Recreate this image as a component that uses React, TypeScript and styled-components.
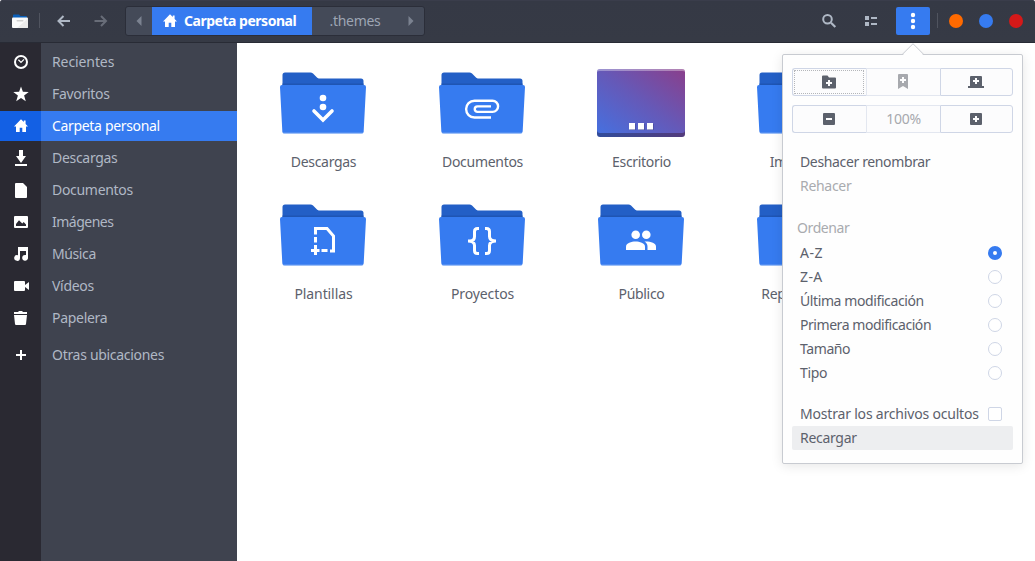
import React from 'react';
import styled, { createGlobalStyle, css } from 'styled-components';

const GlobalStyle = createGlobalStyle`
  * { box-sizing: border-box; }
  body {
    margin: 0;
    background: #fff;
    font-family: 'Noto Sans', 'Open Sans', sans-serif;
    font-size: 14px;
    color: #5c616c;
    overflow: hidden;
  }
  svg { display: block; flex: none; }
`;

const Window = styled.div`
  position: relative;
  display: flex;
  flex-direction: column;
  width: 1035px;
  height: 561px;
  overflow: hidden;
`;

const Header = styled.header`
  flex: none;
  display: flex;
  align-items: center;
  height: 43px;
  padding: 0 12px 1px;
  border-bottom: 1px solid #282b35;
  border-radius: 3px 3px 0 0;
  background: linear-gradient(#353945, #363a45);
  box-shadow: inset 0 1px #3a3d4b;
`;

const Separator = styled.div<{ $left: number; $right: number }>`
  width: 1px;
  height: 15px;
  margin: 0 ${p => p.$right}px 0 ${p => p.$left}px;
  background: #50545f;
`;

const IconButton = styled.button<{ $width: number; $active?: boolean; $dim?: boolean }>`
  display: flex;
  align-items: center;
  justify-content: center;
  width: ${p => p.$width}px;
  height: 28px;
  padding: 0;
  border: 0;
  border-radius: 2px;
  background: ${p => (p.$active ? '#367bf0' : 'transparent')};
  color: ${p => (p.$active ? '#fff' : p.$dim ? '#686d78' : '#afb8c5')};
`;

const PathBar = styled.nav`
  display: flex;
  width: 300px;
  height: 30px;
  margin-left: 7px;
  border: 1px solid #2b2e39;
  border-radius: 3px;
  background: #444a58;
  color: #9da5b3;
`;

const PathStep = styled.div<{ $width: number; $current?: boolean }>`
  display: flex;
  align-items: center;
  justify-content: center;
  gap: 6px;
  width: ${p => p.$width}px;
  height: 28px;
  color: #7b8290;
  ${p => p.$current && css`
    justify-content: flex-start;
    padding-left: 10px;
    background: #367bf0;
    color: #fff;
    font-weight: 700;
  `}
`;

const HeaderTools = styled.div`
  display: flex;
  margin-left: auto;
`;

const ViewTools = styled.div`
  display: flex;
  margin-right: 4px;
`;

const WindowButtons = styled.div`
  display: flex;
  gap: 16px;
`;

const Dot = styled.span<{ $color: string }>`
  width: 14px;
  height: 14px;
  border-radius: 50%;
  background: ${p => p.$color};
`;

const Body = styled.div`
  flex: 1;
  display: flex;
  min-height: 0;
`;

const Sidebar = styled.aside`
  width: 237px;
  padding-top: 4px;
  background: linear-gradient(to right, #2a2932 41px, #3f434f 41px);
`;

const Place = styled.div<{ $selected?: boolean; $offset?: number }>`
  display: flex;
  height: 30px;
  margin: ${p => p.$offset ?? 0}px 0 2px;
  color: ${p => (p.$selected ? '#fff' : '#b0b8c5')};
  background: ${p => (p.$selected ? '#367bf0' : 'transparent')};
`;

const PlaceIcon = styled.div<{ $selected?: boolean }>`
  display: flex;
  align-items: center;
  width: 41px;
  padding-left: 13px;
  color: #fff;
  background: ${p => (p.$selected ? '#1360e4' : 'transparent')};
`;

const Label = styled.span<{ $spacing?: number; $color?: string }>`
  line-height: 20px;
  white-space: nowrap;
  letter-spacing: ${p => p.$spacing ?? -0.3}px;
  ${p => p.$color && `color: ${p.$color};`}
`;

const PlaceLabel = styled(Label)`
  margin: 5px 0 0 11px;
`;

const FileLabel = styled(Label)`
  padding-left: 2px;
`;

const Files = styled.main`
  flex: 1;
  display: grid;
  grid-template-columns: repeat(4, 159px);
  grid-auto-rows: 132px;
  align-content: start;
  padding: 24px 0 0 6px;
  overflow: hidden;
  background: #fff;
`;

const File = styled.div`
  display: flex;
  flex-direction: column;
  align-items: center;
  gap: 13px;
`;

const Popover = styled.section`
  position: absolute;
  left: 782px;
  top: 54px;
  width: 241px;
  height: 410px;
  padding: 13px 9px 0;
  border: 1px solid #c8cbd1;
  border-radius: 2px;
  background: #fefefe;
  box-shadow: 0 2px 12px rgba(0, 0, 0, 0.1);
`;

const Arrow = styled.svg`
  position: absolute;
  left: 118px;
  top: -12px;
`;

const ButtonGroup = styled.div`
  display: grid;
  grid-template-columns: 74px 74px 73px;
  height: 28px;
  margin-bottom: 9px;
`;

const GroupButton = styled.button<{ $disabled?: boolean; $focus?: boolean }>`
  display: flex;
  align-items: center;
  justify-content: center;
  padding: 0 2px 0 0;
  font: inherit;
  color: ${p => (p.$disabled ? '#a7a9ae' : '#5c616c')};
  background: #fcfcfd;
  border: 1px solid #cfd6e6;
  ${p => p.$disabled && 'border-color: #e3e7f0; border-right: 0;'}
  &:first-child { border-radius: 3px 0 0 3px; border-right: 0; }
  &:last-child { border-radius: 0 3px 3px 0; }
  ${p => p.$focus && css`
    outline: 1px dotted #b4b6ba;
    outline-offset: -3px;
  `}
`;

const ZoomLevel = styled(GroupButton)`
  padding: 0;
`;

const MenuItem = styled.div<{ $hover?: boolean; $top?: number; $indent?: number }>`
  display: flex;
  align-items: center;
  justify-content: space-between;
  height: 24px;
  margin-top: ${p => p.$top ?? 0}px;
  padding: 0 11px 0 ${p => p.$indent ?? 8}px;
  border-radius: 2px;
  background: ${p => (p.$hover ? '#edeef0' : 'transparent')};
`;

const Radio = styled.span<{ $checked?: boolean }>`
  width: 14px;
  height: 14px;
  border-radius: 50%;
  border: ${p => (p.$checked ? '5px solid #367bf0' : '1px solid #cfd6e6')};
  background: #fff;
`;

const Checkbox = styled.span`
  width: 14px;
  height: 14px;
  border: 1px solid #cfd6e6;
  border-radius: 2px;
  background: #fff;
`;

const homePath = 'M8 1.2 1 8.600H3V14h3.700V9.800h2.600V14H13V8.600h2L12.600 6V2.500h-1.800v1.600z';

type PlaceEntry = { name: string; icon: React.ReactNode; selected?: boolean; offset?: number; spacing?: number };

const places: PlaceEntry[] = [
  { name: 'Recientes', spacing: -0.1, icon: <><circle cx="8" cy="8" r="6" fill="none" stroke="currentColor" strokeWidth="2" /><path d="M5.400 5.800 8 8.400l3-3" fill="none" stroke="currentColor" strokeWidth="1.300" /></> },
  { name: 'Favoritos', icon: <path d="m8 .6 1.900 5.200 5.800.2-4.600 3.500 1.700 5.700L8 11.900l-4.800 3.300 1.700-5.700L.3 6l5.800-.2z" /> },
  { name: 'Carpeta personal', selected: true, spacing: -0.33, icon: <path d={homePath} /> },
  { name: 'Descargas', icon: <path d="M6 0h4v6h3l-5 7-5-7h3zM2 14h12v2H2z" /> },
  { name: 'Documentos', icon: <path d="M3 1h7l4 4v10a1 1 0 0 1-1 1H3a1 1 0 0 1-1-1V2a1 1 0 0 1 1-1z" /> },
  { name: 'Imágenes', spacing: -0.5, icon: <path fillRule="evenodd" d="M2 2h12a1 1 0 0 1 1 1v10a1 1 0 0 1-1 1H2a1 1 0 0 1-1-1V3a1 1 0 0 1 1-1zm1 10h10V10.500L10.700 8 9.300 9.500 6 6.300 3 10z" /> },
  { name: 'Música', spacing: -0.4, icon: <path d="M5 1h10v10.600a2.900 2.900 0 1 1-2-2.500V5H7v7a2.900 2.900 0 1 1-2-2.800z" /> },
  { name: 'Vídeos', icon: <path d="M2 3h9a1 1 0 0 1 1 1v3l4-3v8l-4-3v3a1 1 0 0 1-1 1H2a1 1 0 0 1-1-1V4a1 1 0 0 1 1-1z" /> },
  { name: 'Papelera', icon: <path d="M1 2h4l1-1h3l1 1h4v2H1zm0 3h13l-1 9a1.200 1.200 0 0 1-1 1H3a1.200 1.200 0 0 1-1-1z" /> },
  { name: 'Otras ubicaciones', offset: 7, icon: <path d="M7 3h2v4h4v2H9v4H7V9H3V7h4z" /> },
];

const emblems = {
  download: <g fill="#fff"><circle cx="43" cy="31" r="3.300" /><circle cx="43" cy="40" r="3.300" /><path d="m34 44 9 9 9-9" fill="none" stroke="#fff" strokeWidth="3.600" strokeLinecap="round" /></g>,
  clip: <path d="M52 50.500H35.500a8.400 8.400 0 0 1 0-16.800h18a5.600 5.600 0 0 1 0 11.200H38.500a2.750 2.750 0 0 1 0-5.500H52" fill="none" stroke="#fff" strokeWidth="2.400" />,
  template: <g fill="none" stroke="#fff" strokeWidth="3"><path d="M35.500 35.500V29.500h11.500l6.500 7.500V52H50" /><path d="M35.500 38v5.500M35.500 46v10M31 51.500h8.500M41.500 51.500h6" /></g>,
  code: <path d="M40 29.500h-1.500q-3 0-3 3v5q0 4.500-4.500 4.500-1 0-2 0 6.500 0 6.500 4.500v5q0 3 3 3H40M46 29.500h1.500q3 0 3 3v5q0 4.500 6.500 4.500-6.500 0-6.500 4.500v5q0 3-3 3H46" fill="none" stroke="#fff" strokeWidth="3" />,
  people: <g fill="#fff"><circle cx="37.700" cy="35.700" r="4.300" /><circle cx="48.300" cy="35.700" r="4.300" /><path d="M28 51v-3.500c0-3.500 5.500-5 9.500-5s9.500 1.500 9.500 5V51z" /><path d="M46.500 42.600c5.500-.3 11.500 1.200 11.500 4.900V51h-8.500v-3.500c0-2-1-3.500-3-4.900z" /></g>,
};

const FolderIcon = ({ emblem }: { emblem?: keyof typeof emblems }) => (
  <svg width="86" height="72" viewBox="0 0 86 72">
    <path d="M2.500 20V8a2.500 2.500 0 0 1 2.500-2.500h25.500c2 0 2.500 1 3.500 2l3 3c.8.800 1.500 1 2.500 1H81a2.500 2.500 0 0 1 2.500 2.500v6z" fill="#235fc6" />
    <path d="M2.500 16.500h81v2h-81z" fill="#1f55b3" />
    <path d="M2 18h82a2 2 0 0 1 2 2l-2.300 44a2.300 2.300 0 0 1-2.200 2.500h-77A2.300 2.300 0 0 1 2.300 64L0 20a2 2 0 0 1 2-2z" fill="#367bf0" />
    <path d="M3 66.200h80" stroke="#a3c3f8" strokeWidth=".8" />
    {emblem && emblems[emblem]}
  </svg>
);

const DesktopIcon = () => (
  <svg width="88" height="72" viewBox="0 0 88 72">
    <defs>
      <linearGradient id="desk" x1="0" y1="1" x2="1" y2="0">
        <stop offset="0" stopColor="#4670df" /><stop offset=".5" stopColor="#6559b8" /><stop offset="1" stopColor="#8a3f8b" />
      </linearGradient>
      <linearGradient id="base"><stop offset="0" stopColor="#314c9b" /><stop offset="1" stopColor="#533b7b" /></linearGradient>
    </defs>
    <rect y="10" width="88" height="60" rx="3" fill="url(#base)" />
    <rect y="2" width="88" height="64" rx="3" fill="url(#desk)" />
    <path d="M0 5a3 3 0 0 1 3-3h82a3 3 0 0 1 3 3q0-1-3-1H3Q0 4 0 5z" fill="#fff" opacity=".35" />
    <path d="M32.500 57h6v6h-6zm9 0h6v6h-6zm9 0h6v6h-6z" fill="#2a2750" opacity=".5" />
    <path d="M32 56h6v6.500h-6zm9 0h6v6.500h-6zm9 0h6v6.500h-6z" fill="#fff" />
  </svg>
);

const files: { name: string; icon: React.ReactNode; spacing?: number }[] = [
  { name: 'Descargas', icon: <FolderIcon emblem="download" /> },
  { name: 'Documentos', icon: <FolderIcon emblem="clip" /> },
  { name: 'Escritorio', icon: <DesktopIcon /> },
  { name: 'Imágenes', icon: <FolderIcon />, spacing: -0.5 },
  { name: 'Plantillas', icon: <FolderIcon emblem="template" />, spacing: -0.1 },
  { name: 'Proyectos', icon: <FolderIcon emblem="code" />, spacing: -0.1 },
  { name: 'Público', icon: <FolderIcon emblem="people" /> },
  { name: 'Repositorios', icon: <FolderIcon /> },
];

const Icon = ({ children, size = 16 }: { children: React.ReactNode; size?: number }) => (
  <svg width={size} height={size} viewBox={`0 0 ${size} ${size}`} fill="currentColor">{children}</svg>
);

const sortOptions = [
  { name: 'A-Z', spacing: 0.5 },
  { name: 'Z-A', spacing: 0.4 },
  { name: 'Última modificación', spacing: -0.4 },
  { name: 'Primera modificación', spacing: -0.45 },
  { name: 'Tamaño', spacing: -0.4 },
  { name: 'Tipo', spacing: -0.3 },
];

export default function App() {
  return (
    <Window>
      <GlobalStyle />
      <Header>
        <Icon>
          <path d="M1 8V2.500a1 1 0 0 1 1-1h5L8.500 3H14a1 1 0 0 1 1 1v4z" fill="#0b5fb8" />
          <rect y="4.500" width="16" height="10.500" rx="1" fill="#fafafa" />
          <path d="M16 5.500V14a1 1 0 0 1-1 1H5z" fill="#ebebeb" />
          <rect x="4.500" y="7" width="7" height="1.600" rx=".8" fill="#cfcfcf" />
        </Icon>
        <Separator $left={11} $right={6} />
        <IconButton $width={36}><Icon><path d="M14 8H3M7.500 3 2.500 8l5 5" fill="none" stroke="currentColor" strokeWidth="2" /></Icon></IconButton>
        <IconButton $width={36} $dim><Icon><path d="M2.500 8h11M9 3l5 5-5 5" fill="none" stroke="currentColor" strokeWidth="2" /></Icon></IconButton>
        <PathBar>
          <PathStep $width={26}><Icon><path d="M10.500 3v10L5.500 8z" /></Icon></PathStep>
          <PathStep $width={160} $current>
            <Icon><path d={homePath} /></Icon>
            <Label $spacing={-0.48}>Carpeta personal</Label>
          </PathStep>
          <PathStep $width={86}><Label $color="#9da5b3">.themes</Label></PathStep>
          <PathStep $width={26}><Icon><path d="M5.500 3v10l5-5z" /></Icon></PathStep>
        </PathBar>
        <HeaderTools>
          <ViewTools>
            <IconButton $width={42}><Icon><path d="M10 9.800 14.300 14" stroke="currentColor" strokeWidth="2.200" /><circle cx="6.500" cy="6.300" r="4.300" fill="none" stroke="currentColor" strokeWidth="2" /></Icon></IconButton>
            <IconButton $width={42}><Icon><path d="M2 3h4v4H2zm0 6h4v4H2zm6-5h6v2H8zm0 6h6v2H8z" /></Icon></IconButton>
          </ViewTools>
          <IconButton $width={34} $active><Icon size={18}><circle cx="9" cy="3" r="2.200" /><circle cx="9" cy="9" r="2.200" /><circle cx="9" cy="15" r="2.200" /></Icon></IconButton>
        </HeaderTools>
        <Separator $left={7} $right={11} />
        <WindowButtons>
          <Dot $color="#ff6a00" /><Dot $color="#367bf0" /><Dot $color="#d41919" />
        </WindowButtons>
      </Header>
      <Body>
        <Sidebar>
          {places.map(p => (
            <Place key={p.name} $selected={p.selected} $offset={p.offset}>
              <PlaceIcon $selected={p.selected}><Icon>{p.icon}</Icon></PlaceIcon>
              <PlaceLabel $spacing={p.spacing}>{p.name}</PlaceLabel>
            </Place>
          ))}
        </Sidebar>
        <Files>
          {files.map(f => (
            <File key={f.name}>{f.icon}<FileLabel $spacing={f.spacing}>{f.name}</FileLabel></File>
          ))}
        </Files>
      </Body>
      <Popover>
        <Arrow width="24" height="13" viewBox="0 0 24 13">
          <path d="M1 13 12 1l11 12z" fill="#fefefe" />
          <path d="M.5 11.500h.7L12 .700 22.800 11.500h.7" fill="none" stroke="#c8cbd1" />
        </Arrow>
        <ButtonGroup>
          <GroupButton $focus><Icon><path fillRule="evenodd" d="M1 2.500a1 1 0 0 1 1-1h4.500l1.500 2h6a1 1 0 0 1 1 1V13.500a1 1 0 0 1-1 1H2a1 1 0 0 1-1-1zM7 6v2H5v2h2v2h2v-2h2V8H9V6z" /></Icon></GroupButton>
          <GroupButton $disabled><Icon><path fillRule="evenodd" d="M4 0h8a1 1 0 0 1 1 1v14l-5-3-5 3V1a1 1 0 0 1 1-1zm3 3v2H5v2h2v2h2V7h2V5H9V3z" /></Icon></GroupButton>
          <GroupButton><Icon><path fillRule="evenodd" d="M3 2h10a1 1 0 0 1 1 1v9h2v2H0v-2h2V3a1 1 0 0 1 1-1zm4 2v2H5v2h2v2h2V8h2V6H9V4z" /></Icon></GroupButton>
        </ButtonGroup>
        <ButtonGroup>
          <GroupButton><Icon><path fillRule="evenodd" d="M3 2h10a1 1 0 0 1 1 1v10a1 1 0 0 1-1 1H3a1 1 0 0 1-1-1V3a1 1 0 0 1 1-1zm2 5v2h6V7z" /></Icon></GroupButton>
          <ZoomLevel $disabled><Label>100%</Label></ZoomLevel>
          <GroupButton><Icon><path fillRule="evenodd" d="M3 2h10a1 1 0 0 1 1 1v10a1 1 0 0 1-1 1H3a1 1 0 0 1-1-1V3a1 1 0 0 1 1-1zm4 3v2H5v2h2v2h2V9h2V7H9V5z" /></Icon></GroupButton>
        </ButtonGroup>
        <MenuItem $top={17}><Label $spacing={-0.36}>Deshacer renombrar</Label></MenuItem>
        <MenuItem><Label $color="#a9abaf">Rehacer</Label></MenuItem>
        <MenuItem $top={18} $indent={5}><Label $color="#a9abaf" $spacing={-0.4}>Ordenar</Label></MenuItem>
        {sortOptions.map((o, i) => (
          <MenuItem key={o.name} $top={i === 0 ? 1 : 0}><Label $spacing={o.spacing}>{o.name}</Label><Radio $checked={i === 0} /></MenuItem>
        ))}
        <MenuItem $top={17}><Label $spacing={-0.19}>Mostrar los archivos ocultos</Label><Checkbox /></MenuItem>
        <MenuItem $hover><Label>Recargar</Label></MenuItem>
      </Popover>
    </Window>
  );
}
